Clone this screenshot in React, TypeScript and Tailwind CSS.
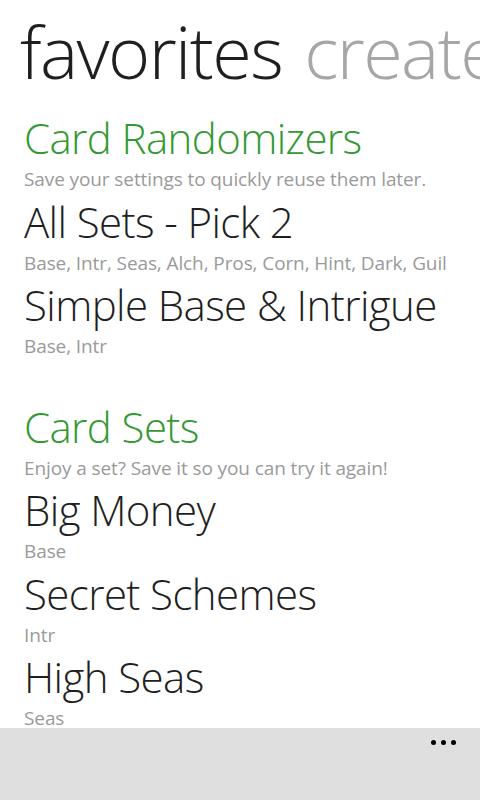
import React from "react";

type Entry = { title: string; sets: string };

const randomizers: Entry[] = [
  { title: "All Sets - Pick 2", sets: "Base, Intr, Seas, Alch, Pros, Corn, Hint, Dark, Guil" },
  { title: "Simple Base & Intrigue", sets: "Base, Intr" },
];

const cardSets: Entry[] = [
  { title: "Big Money", sets: "Base" },
  { title: "Secret Schemes", sets: "Intr" },
  { title: "High Seas", sets: "Seas" },
];

const font = { fontFamily: '"Open Sans", "Noto Sans", sans-serif' };

function Item({ entry }: { entry: Entry }) {
  return (
    <div>
      <p className="whitespace-nowrap text-[42px] font-[350] leading-[52px] tracking-[-0.6px] text-[#1f1f1f]">{entry.title}</p>
      <p className="whitespace-nowrap text-[19px] leading-[31.5px] tracking-[-0.1px] text-[#9a9a9a]">{entry.sets}</p>
    </div>
  );
}

function Section({ title, hint, items }: { title: string; hint: string; items: Entry[] }) {
  return (
    <section>
      <h2 className="whitespace-nowrap text-[42px] font-[350] leading-[52px] tracking-[-0.6px] text-[#339933]">{title}</h2>
      <p className="whitespace-nowrap text-[19px] leading-[31.5px] tracking-[-0.1px] text-[#9a9a9a]">{hint}</p>
      {items.map((entry) => (
        <Item entry={entry} key={entry.title} />
      ))}
    </section>
  );
}

export default function App() {
  return (
    <div className="flex h-[800px] w-[480px] flex-col overflow-hidden bg-white" style={font}>
      <div className="flex-1 overflow-hidden">
        <header className="flex gap-[22px] overflow-hidden whitespace-nowrap pl-[20px] pt-[3px] text-[72px] font-light leading-[96px] tracking-[-1.6px]">
          <span className="text-[#1f1f1f]">favorites</span>
          <span className="text-[#a6a6a6]">create</span>
        </header>
        <div className="mt-[13px] flex flex-col gap-[38px] pl-[24px]">
          <Section title="Card Randomizers" hint="Save your settings to quickly reuse them later." items={randomizers} />
          <Section title="Card Sets" hint="Enjoy a set? Save it so you can try it again!" items={cardSets} />
        </div>
      </div>
      <footer className="flex h-[72px] shrink-0 justify-end bg-[#dfdfdf] pr-[24px] pt-[12px]">
        <div className="flex h-[5px] gap-[5px]">
          <span className="h-[5px] w-[5px] rounded-full bg-black" />
          <span className="h-[5px] w-[5px] rounded-full bg-black" />
          <span className="h-[5px] w-[5px] rounded-full bg-black" />
        </div>
      </footer>
    </div>
  );
}
